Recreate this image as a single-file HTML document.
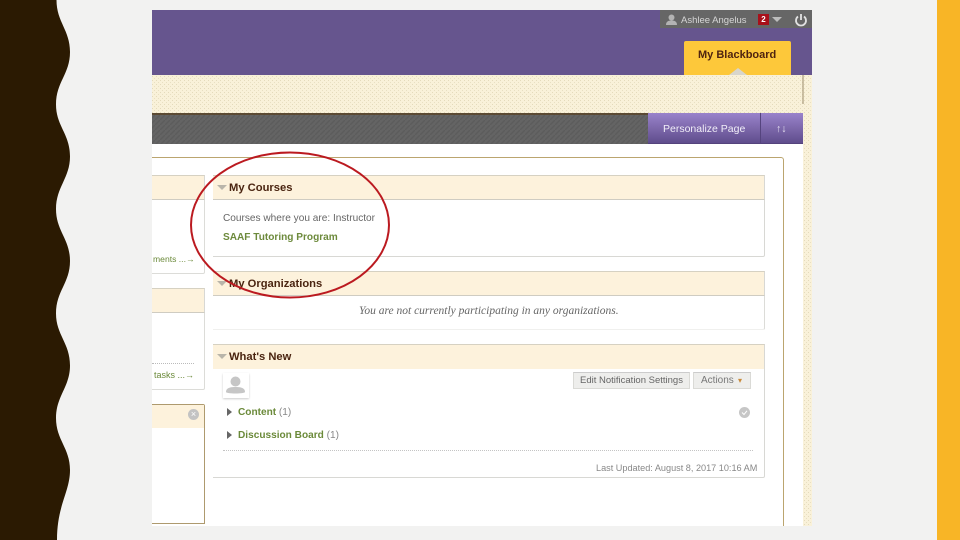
<!DOCTYPE html>
<html><head><meta charset="utf-8">
<style>
html,body{margin:0;padding:0}
body{width:960px;height:540px;background:#f2f2f1;position:relative;overflow:hidden;font-family:"Liberation Sans",sans-serif}
div{position:absolute;box-sizing:border-box}
.t{white-space:nowrap;line-height:12px;filter:blur(.35px)}
.hd{background:#fdf2dc;border-top:1px solid #d6d1c2;border-bottom:1px solid #cfccc2;border-right:1px solid #d8d8d4;height:25px}
.ttl{font-weight:bold;font-size:11.2px;color:#4a2410;left:229px}
.tri{width:0;height:0;border-left:5px solid transparent;border-right:5px solid transparent;border-top:5px solid #b9b5aa}
</style></head><body>
<svg width="960" height="540" style="position:absolute;left:0;top:0">
<defs><pattern id="p" width="4" height="4" patternUnits="userSpaceOnUse"><rect width="4" height="4" fill="#f9f1d9"/><rect x="0" y="0" width="1" height="1" fill="#e4dabb"/><rect x="2" y="2" width="1" height="1" fill="#e8dfc2"/></pattern>
<pattern id="s" width="5" height="5" patternUnits="userSpaceOnUse"><rect width="5" height="5" fill="#646464"/><path d="M0 5L5 0" stroke="#5c5c5c" stroke-width="1.500"/></pattern></defs>
<path fill="#2b1a02" d="M0 0H56.500C56.500 22 70 30 70 52C70 74 56 82 56 104.500C56 126 70 134 70 156.500C70 178 56 187 56 209C56 231 70 239 70 261C70 283 56 291 56 313.500C56 335 70 343 70 365.500C70 387 56 396 56 418C56 440 70 448 70 470C70 492 57 505 57 540H0Z"/>
<rect x="937" y="0" width="23" height="540" fill="#f8b526"/>
<rect x="152" y="10" width="660" height="516" fill="#fff"/>
<rect x="152" y="75" width="660" height="451" fill="url(#p)"/>
<rect x="152" y="10" width="660" height="65" fill="#66558e"/>
<rect x="152" y="144" width="651" height="382" fill="#fff"/>
<rect x="152" y="113" width="497" height="31" fill="url(#s)"/>
<rect x="152" y="113" width="497" height="2" fill="#5b4a33"/>
<rect x="802.500" y="75" width="1" height="29" fill="#9a8b6c"/>
</svg>

<!-- top bar -->
<div style="left:660px;top:10px;width:152px;height:18px;background:#666"></div>
<div style="left:666px;top:14px;width:11px;height:11px"><svg width="11" height="11" style="display:block"><circle cx="5.500" cy="3.500" r="3" fill="#b3b3b3"/><path d="M0 11C0 7 3 6.500 5.500 6.500S11 7 11 11Z" fill="#b3b3b3"/></svg></div>
<div class="t" style="left:681px;top:15px;font-size:9.500px;color:#d6d6d6">Ashlee Angelus</div>
<div class="t" style="left:758px;top:14px;width:11px;height:11px;background:#a8101a;color:#fff;font-size:8px;font-weight:bold;text-align:center;line-height:11px">2</div>
<div class="tri" style="left:772px;top:17px;border-top-color:#bdbdbd"></div>
<div style="left:794px;top:13px"><svg width="14" height="14" style="display:block" fill="none" stroke="#e2e2e2" stroke-width="1.800"><path d="M4 3.500A5 5 0 1 0 10 3.500"/><path d="M7 1V7"/></svg></div>
<div style="left:684px;top:41px;width:107px;height:34px;background:#fdc83a;border-radius:2px 2px 0 0"></div>
<div class="t" style="left:698px;top:49px;font-size:11px;font-weight:bold;color:#4f2410">My Blackboard</div>
<div style="left:729px;top:68px;width:0;height:0;border-left:9px solid transparent;border-right:9px solid transparent;border-bottom:7px solid #d9d6cc"></div>

<!-- personalize -->
<div style="left:648px;top:113px;width:155px;height:31px;background:linear-gradient(#9a83cb,#5f4d8c);border-bottom:1px solid #54437c"></div>
<div style="left:760px;top:113px;width:1px;height:31px;background:#55447e"></div>
<div class="t" style="left:663px;top:123px;font-size:10.500px;color:#f1eef8">Personalize Page</div>
<div class="t" style="left:776px;top:123px;font-size:10.500px;color:#e8e4f2">↑↓</div>

<!-- outer content panel -->
<div style="left:152px;top:157px;width:632px;height:369px;border-top:1px solid #bba56f;border-right:1px solid #bba56f;border-radius:0 3px 0 0"></div>

<!-- left col -->
<div style="left:152px;top:175px;width:53px;height:99px;background:#fff;border:1px solid #dcdcd8;border-left:0;border-radius:0 2px 2px 0"></div>
<div class="hd" style="left:152px;top:175px;width:53px"></div>
<div class="t" style="left:153px;top:253px;font-size:8.600px;color:#6b8a3a">ments ...→</div>
<div style="left:152px;top:288px;width:53px;height:102px;background:#fff;border:1px solid #dcdcd8;border-left:0;border-radius:0 2px 2px 0"></div>
<div class="hd" style="left:152px;top:288px;width:53px"></div>
<div style="left:152px;top:363px;width:42px;border-top:1px dotted #bbb"></div>
<div class="t" style="left:154px;top:369px;font-size:9px;color:#6b8a3a">tasks ...→</div>
<div style="left:152px;top:404px;width:53px;height:120px;background:#fff;border:1px solid #ae9a6e;border-left:0;border-radius:0 2px 0 0"></div>
<div style="left:152px;top:405px;width:52px;height:23px;background:#fdf2dc"></div>
<div style="left:188px;top:409px;width:11px;height:11px;border-radius:50%;background:#c3c3c3;color:#fff;font-size:9px;line-height:11px;text-align:center">×</div>

<!-- my courses -->
<div style="left:213px;top:175px;width:552px;height:82px;background:#fff;border:1px solid #d8d8d4;border-left:0;border-radius:0 2px 2px 0"></div>
<div class="hd" style="left:213px;top:175px;width:552px"></div>
<div class="tri" style="left:217px;top:185px"></div>
<div class="t ttl" style="top:182px">My Courses</div>
<div class="t" style="left:223px;top:213px;font-size:10.100px;color:#666">Courses where you are: Instructor</div>
<div class="t" style="left:223px;top:232px;font-size:10.100px;font-weight:bold;color:#6d8a3c">SAAF Tutoring Program</div>

<!-- my orgs -->
<div style="left:213px;top:271px;width:552px;height:59px;background:#fff;border:1px solid #dcdcd8;border-left:0;border-bottom-color:#f0f0ee;border-radius:0 2px 2px 0"></div>
<div class="hd" style="left:213px;top:271px;width:552px"></div>
<div class="tri" style="left:217px;top:281px"></div>
<div class="t ttl" style="top:278px">My Organizations</div>
<div class="t" style="left:359px;top:305px;font-size:11.500px;font-style:italic;font-family:'Liberation Serif',serif;color:#666">You are not currently participating in any organizations.</div>

<!-- what's new -->
<div style="left:213px;top:344px;width:552px;height:134px;background:#fff;border:1px solid #d8d8d4;border-left:0;border-radius:0 2px 2px 0"></div>
<div class="hd" style="left:213px;top:344px;width:552px;border-bottom:0"></div>
<div class="tri" style="left:217px;top:354px"></div>
<div class="t ttl" style="top:351px">What's New</div>
<div style="left:223px;top:373px;width:26px;height:25px;background:#fff;box-shadow:0 1px 2px #ccc"><svg width="26" height="25" style="display:block"><circle cx="12.500" cy="8.500" r="5" fill="#c6c6c6"/><path d="M3 19C3 14.500 8 14 12.500 14S22 14.500 22 19C22 21 3 21 3 19Z" fill="#c6c6c6"/></svg></div>
<div style="left:573px;top:372px;width:117px;height:17px;background:#eeeeec;border:1px solid #dadad6;border-top:1px solid #ccc"></div>
<div class="t" style="left:580px;top:375px;font-size:9.500px;color:#666">Edit Notification Settings</div>
<div style="left:693px;top:372px;width:58px;height:17px;background:#eeeeec;border:1px solid #dadad6;border-top:1px solid #ccc"></div>
<div class="t" style="left:701px;top:375px;font-size:10px;color:#777">Actions</div>
<div class="t" style="left:738px;top:375px;font-size:8px;color:#c98b3c">▾</div>
<div style="left:227px;top:408px;width:0;height:0;border-top:4px solid transparent;border-bottom:4px solid transparent;border-left:5px solid #666"></div>
<div class="t" style="left:238px;top:407px;font-size:10.100px;color:#888"><span style="color:#6b8a3a;font-weight:bold">Content</span> (1)</div>
<div style="left:227px;top:431px;width:0;height:0;border-top:4px solid transparent;border-bottom:4px solid transparent;border-left:5px solid #666"></div>
<div class="t" style="left:238px;top:430px;font-size:10.100px;color:#888"><span style="color:#6b8a3a;font-weight:bold">Discussion Board</span> (1)</div>
<div style="left:739px;top:407px"><svg width="11" height="11" style="display:block"><circle cx="5.500" cy="5.500" r="5.500" fill="#c6c6c6"/><path d="M3 5.500L5 7.500L8 3.800" stroke="#fff" fill="none"/></svg></div>
<div style="left:223px;top:450px;width:530px;border-top:1px dotted #c4c4c4"></div>
<div class="t" style="left:596px;top:462px;font-size:9.150px;color:#888">Last Updated: August 8, 2017 10:16 AM</div>

<!-- red ellipse -->
<svg width="960" height="540" style="position:absolute;left:0;top:0"><ellipse cx="290" cy="225" rx="99" ry="72.500" fill="none" stroke="#bb1a20" stroke-width="2"/></svg>
</body></html>
